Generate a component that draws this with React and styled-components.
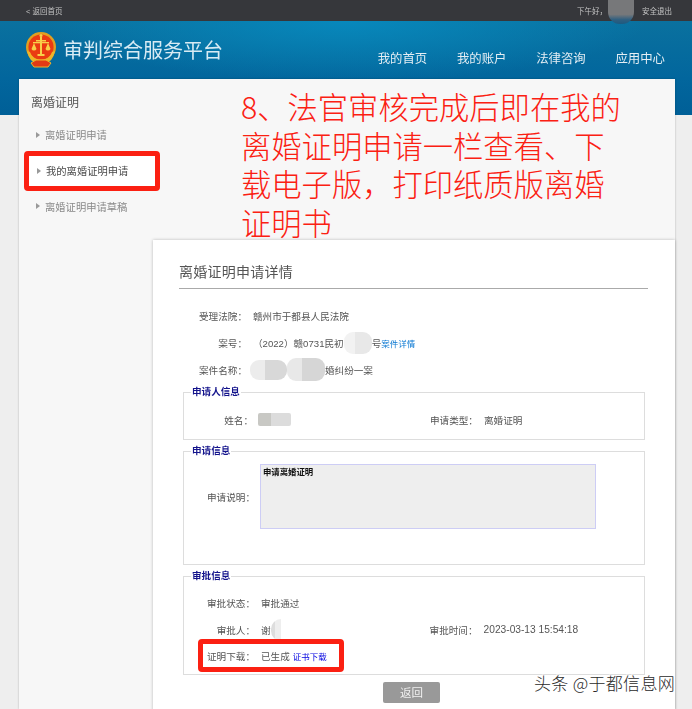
import styled, { createGlobalStyle, css } from "styled-components";

const GlobalStyle = createGlobalStyle`
  html, body {
    margin: 0;
    padding: 0;
    background: #eeeeee;
  }
  * {
    box-sizing: border-box;
  }
`;

// the reference is a slightly soft, upscaled capture
const soft = css`
  filter: blur(0.35px);
`;

const Page = styled.div`
  position: relative;
  width: 692px;
  height: 709px;
  overflow: hidden;
  background: #eeeeee;
  font-family: "Liberation Sans", "Noto Sans CJK SC", sans-serif;
`;

const TopBar = styled.div`
  ${soft}
  position: relative;
  z-index: 2;
  display: flex;
  justify-content: space-between;
  align-items: center;
  height: 21px;
  padding: 0 20px 0 26px;
  background: #36373b;
  color: #c4c4c4;
  font-size: 7.5px;
`;

const UserArea = styled.div`
  display: flex;
  align-items: center;
`;

const Avatar = styled.span`
  width: 26px;
  height: 24px;
  margin: 2px 8px 0 1px;
  border-radius: 0 0 12px 12px;
  background: linear-gradient(#77787a 0, #77787a 60%, #2f5f80 82%, #1d5a80 100%);
  filter: blur(0.6px);
`;

const Header = styled.header`
  display: flex;
  align-items: flex-start;
  justify-content: space-between;
  height: 58px;
  padding: 10px 27px 0 25px;
  background:
    radial-gradient(ellipse 300px 60px at 50% 0, #0788bc 0, rgba(7, 136, 188, 0) 100%),
    linear-gradient(#0a719f, #02669d);
`;

const Brand = styled.div`
  display: flex;
  align-items: center;
  gap: 6px;
`;

const BrandTitle = styled.h1`
  ${soft}
  margin: 2px 0 0;
  font-size: 20px;
  font-weight: 400;
  line-height: 36px;
  color: #d8ebf4;
`;

const NavBar = styled.nav`
  ${soft}
  display: flex;
  gap: 29.7px;
  padding-top: 19px;
`;

const NavLink = styled.a`
  font-size: 12.4px;
  line-height: 18px;
  color: #e4eef4;
`;

const Stage = styled.div`
  height: 630px;
  padding: 0 17px 0 19px;
  background: linear-gradient(#02669d 0, #005f97 36px, #eeeeee 36px);
`;

const Panel = styled.div`
  display: grid;
  grid-template-columns: 134px 1fr;
  height: 630px;
  background: #f7f7f7;
  box-shadow: 0 0 2px rgba(0, 0, 0, 0.25);
`;

const Sidebar = styled.aside`
  ${soft}
  padding-top: 12px;
`;

const SideTitle = styled.div`
  height: 24px;
  margin: 0 0 2px 12px;
  font-size: 12px;
  line-height: 24px;
  color: #555555;
`;

const SideItem = styled.div`
  display: flex;
  align-items: center;
  gap: 5px;
  width: 136px;
  height: ${(p) => (p.$active ? "40px" : "35.5px")};
  margin: ${(p) => (p.$active ? "-2px 0 -2px 5px" : "0 0 0 5px")};
  padding-left: ${(p) => (p.$active ? "8px" : "12px")};
  font-size: 10.3px;
  color: ${(p) => (p.$active ? "#4a4a4a" : "#8a8a8a")};
  background: ${(p) => (p.$active ? "#ffffff" : "transparent")};
  border: ${(p) => (p.$active ? "5px solid #fb2012" : "0")};
  border-radius: 4px;
`;

const Arrow = styled.i`
  width: 0;
  height: 0;
  border-left: 4px solid #999999;
  border-top: 3.5px solid transparent;
  border-bottom: 3.5px solid transparent;
`;

const Main = styled.main`
  min-width: 0;
`;

const Annotation = styled.div`
  height: 161px;
  padding: 8px 49px 0 88px;
  font-family: "Noto Sans CJK SC", sans-serif;
  font-size: 30.3px;
  font-weight: 300;
  line-height: 38.5px;
  color: #fb2012;
`;

const Card = styled.section`
  ${soft}
  height: 480px;
  padding: 16px 27px 0 26px;
  background: #ffffff;
  box-shadow: 0 0 3px rgba(0, 0, 0, 0.25);
  font-size: 9.6px;
  color: #555555;
`;

const CardTitle = styled.h2`
  height: 33px;
  margin: 0 0 13px;
  border-bottom: 1.5px solid #aaaaaa;
  font-size: 14px;
  font-weight: 400;
  line-height: 32px;
  letter-spacing: 0.25px;
  color: #555555;
`;

const Details = styled.div`
  margin-bottom: 2px;
`;

const Row = styled.div`
  display: flex;
  align-items: center;
  height: ${(p) => p.$height || 27}px;
`;

const Label = styled.span`
  flex: none;
  width: ${(p) => p.$width}px;
  margin-right: ${(p) => p.$gap}px;
  text-align: right;
  white-space: nowrap;
`;

const Spacer = styled.span`
  flex: none;
  width: ${(p) => p.$width}px;
`;

const Value = styled.span`
  white-space: nowrap;
  font-size: ${(p) => p.$size || 9.6}px;
  color: #555555;
`;

const TextLink = styled.a`
  margin-left: ${(p) => p.$gap}px;
  white-space: nowrap;
  font-size: 8.5px;
  color: ${(p) => p.$color};
`;

const Mosaic = styled.span`
  display: inline-block;
  flex: none;
  width: ${(p) => p.$w}px;
  height: ${(p) => p.$h}px;
  margin: -8px 0 -8px ${(p) => p.$left || 0}px;
  vertical-align: middle;
  border-radius: ${(p) => p.$radius || "9px"};
  background: linear-gradient(
    90deg,
    ${(p) => p.$from} 0,
    ${(p) => p.$from} 40%,
    ${(p) => p.$to} 40%,
    ${(p) => p.$to} 100%
  );
  filter: blur(0.7px);
`;

const Group = styled.fieldset`
  margin: 0 3px 4px 4px;
  padding: ${(p) => p.$padding};
  min-width: 0;
  border: 1.5px solid #dddddd;
`;

const GroupLegend = styled.legend`
  margin-left: 7px;
  padding: 0 1px;
  font-size: 9.6px;
  font-weight: 700;
  line-height: 14px;
  color: #14148c;
`;

const NoteBox = styled.div`
  flex: none;
  width: 336px;
  height: 65px;
  padding: 1px 2px;
  background: #eeeeee;
  border: 1.5px solid #cdcdf5;
  font-size: 8.4px;
  font-weight: 700;
  line-height: 12px;
  color: #111111;
`;

const HighlightRow = styled(Row)`
  position: relative;
`;

const Highlight = styled.span`
  position: absolute;
  top: -4px;
  left: 14px;
  width: 146px;
  height: 33px;
  border: 5px solid #fb2012;
  border-radius: 4px;
`;

const BackButton = styled.button`
  display: block;
  width: 57px;
  height: 21px;
  margin: 7px 0 0 204px;
  padding: 0;
  border: 0;
  border-radius: 2px;
  background: #999999;
  font: inherit;
  font-size: 11.5px;
  color: #f0f0f0;
`;

const Watermark = styled.div`
  position: absolute;
  right: 17px;
  top: 672px;
  font-family: "Noto Sans CJK SC", sans-serif;
  font-size: 17px;
  font-weight: 300;
  line-height: 22px;
  letter-spacing: 0.3px;
  white-space: nowrap;
  color: #2a2a2a;
  text-shadow: 0 0 2px #ffffff, 1px 1px 0 #ffffff, -1px -1px 0 #ffffff;
`;

function CourtEmblem() {
  return (
    <svg width="32" height="36" viewBox="0 0 32 36">
      <circle cx="16" cy="15" r="15" fill="#e0a020" />
      <circle cx="16" cy="15" r="12.6" fill="#ea3a12" />
      <path d="M2 19 Q4 30 13 32 L19 32 Q28 30 30 19 L27 20 Q25 27 16 28 Q7 27 5 20 Z" fill="#eeb528" />
      <path d="M6 31 L11 28 L21 28 L26 31 L23 35 L9 35 Z" fill="#e23a14" stroke="#eeb528" strokeWidth="1" />
      <path d="M15 5 H17 V8 H21 V9.5 H17 V22 H19.5 V24 H12.5 V22 H15 V9.5 H11 V8 H15 Z" fill="#f8d048" />
      <path d="M8 10 H24 V11.3 H8 Z" fill="#f8d048" />
      <path
        d="M9 11 L6.5 17 A2.8 2.8 0 0 0 11.5 17 Z M23 11 L20.5 17 A2.8 2.8 0 0 0 25.5 17 Z"
        fill="#f8d048"
      />
      <circle cx="16" cy="3.6" r="1.5" fill="#f8d048" />
    </svg>
  );
}

export default function App() {
  return (
    <Page>
      <GlobalStyle />
      <TopBar>
        <span>&lt; 返回首页</span>
        <UserArea>
          <span>下午好，</span>
          <Avatar />
          <span>安全退出</span>
        </UserArea>
      </TopBar>

      <Header>
        <Brand>
          <CourtEmblem />
          <BrandTitle>审判综合服务平台</BrandTitle>
        </Brand>
        <NavBar>
          <NavLink>我的首页</NavLink>
          <NavLink>我的账户</NavLink>
          <NavLink>法律咨询</NavLink>
          <NavLink>应用中心</NavLink>
        </NavBar>
      </Header>

      <Stage>
        <Panel>
          <Sidebar>
            <SideTitle>离婚证明</SideTitle>
            <SideItem>
              <Arrow />
              离婚证明申请
            </SideItem>
            <SideItem $active>
              <Arrow />
              我的离婚证明申请
            </SideItem>
            <SideItem>
              <Arrow />
              离婚证明申请草稿
            </SideItem>
          </Sidebar>

          <Main>
            <Annotation>8、法官审核完成后即在我的离婚证明申请一栏查看、下载电子版，打印纸质版离婚证明书</Annotation>

            <Card>
              <CardTitle>离婚证明申请详情</CardTitle>

              <Details>
                <Row>
                  <Label $width={68} $gap={6}>受理法院：</Label>
                  <Value>赣州市于都县人民法院</Value>
                </Row>
                <Row>
                  <Label $width={68} $gap={6}>案号：</Label>
                  <Value>（2022）赣0731民初</Value>
                  <Mosaic $w={28} $h={22} $from="#f2f2f2" $to="#e8e8e8" />
                  <Value>号</Value>
                  <TextLink $color="#0a78d2" $gap={0}>案件详情</TextLink>
                </Row>
                <Row>
                  <Label $width={68} $gap={6}>案件名称：</Label>
                  <Mosaic $left={-3} $w={37} $h={20} $from="#ececec" $to="#d8d8d8" />
                  <Mosaic $w={38} $h={23} $from="#e8e8e8" $to="#d6d6d6" />
                  <Value>婚纠纷一案</Value>
                </Row>
              </Details>

              <Group $padding="7px 0 6px">
                <GroupLegend>申请人信息</GroupLegend>
                <Row>
                  <Label $width={69} $gap={5}>姓名：</Label>
                  <Mosaic $w={33} $h={13} $radius="2px" $from="#c8c8c4" $to="#dcdcdc" />
                  <Spacer $width={139} />
                  <Label $width={46} $gap={8}>申请类型：</Label>
                  <Value>离婚证明</Value>
                </Row>
              </Group>

              <Group $padding="6px 0 35px">
                <GroupLegend>申请信息</GroupLegend>
                <Row $height={65}>
                  <Label $width={71} $gap={5}>申请说明：</Label>
                  <NoteBox>申请离婚证明</NoteBox>
                </Row>
              </Group>

              <Group $padding="7px 0 4px">
                <GroupLegend>审批信息</GroupLegend>
                <Row $height={26.5}>
                  <Label $width={71} $gap={6}>审批状态：</Label>
                  <Value>审批通过</Value>
                </Row>
                <Row $height={26.5}>
                  <Label $width={71} $gap={6}>审批人：</Label>
                  <Value>谢</Value>
                  <Mosaic $w={10} $h={22} $radius="10px 0 0 10px" $from="#dddddd" $to="#eeeeee" />
                  <Spacer $width={149} />
                  <Label $width={46} $gap={8}>审批时间：</Label>
                  <Value $size={10.2}>2023-03-13 15:54:18</Value>
                </Row>
                <HighlightRow $height={26.5}>
                  <Label $width={71} $gap={6}>证明下载：</Label>
                  <Value>已生成</Value>
                  <TextLink $color="#0000e0" $gap={3}>证书下载</TextLink>
                  <Highlight />
                </HighlightRow>
              </Group>

              <BackButton>返回</BackButton>
            </Card>
          </Main>
        </Panel>
      </Stage>

      <Watermark>头条 @于都信息网</Watermark>
    </Page>
  );
}
